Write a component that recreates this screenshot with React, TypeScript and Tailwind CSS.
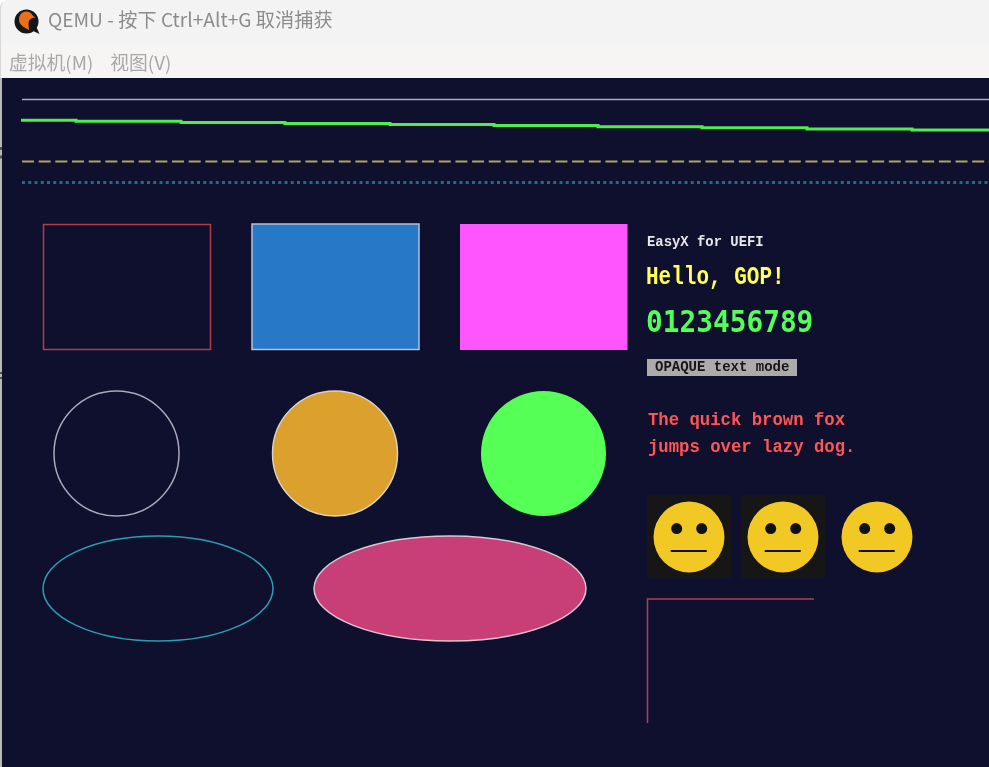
const Smiley = ({ box }: { box: boolean }) => (
  <div className={`w-[84px] h-[83px] flex items-center justify-center ${box ? "bg-[#161616]" : ""}`}>
    <svg width="72" height="72" viewBox="0 0 72 72">
      <circle cx="36" cy="36" r="35.5" fill="#f2c824" />
      <circle cx="23.7" cy="27.6" r="5.5" fill="#111" />
      <circle cx="48.7" cy="27.6" r="5.5" fill="#111" />
      <rect x="17.700" y="49" width="36" height="2" fill="#111" />
    </svg>
  </div>
);

// framebuffer drawing, viewBox uses window coordinates
const Shapes = () => (
  <svg className="absolute left-[-2px] top-0" width="989" height="689" viewBox="0 78 989 689" fill="none">
    <path d="M0 148.500H2M0 157H2" stroke="#555" strokeWidth="3" />
    <path d="M0 373H2M0 378H2" stroke="#555" strokeWidth="2" />
    <line x1="22" y1="99.500" x2="989" y2="99.500" stroke="#b0adbe" strokeWidth="1.600" />
    <path d="M21 120.200H76V121.300H181V122.400H285V123.500H390V124.500H494V125.600H598V126.700H702V127.800H807V128.900H912V130H989" stroke="#4dee4d" strokeWidth="3" />
    <line x1="22" y1="161.500" x2="989" y2="161.500" stroke="#b0a658" strokeWidth="2.200" strokeDasharray="12 4.67" />
    <line x1="22" y1="182.500" x2="989" y2="182.500" stroke="#226c82" strokeWidth="2.800" strokeDasharray="3 3.250" />
    <rect x="43.500" y="224.500" width="167" height="125" stroke="#b03c4e" strokeWidth="1.500" />
    <rect x="252" y="224" width="167" height="125.500" fill="#2878c8" stroke="#b4c4d8" strokeWidth="1.500" />
    <rect x="460" y="224" width="167.500" height="126" fill="#ff55ff" />
    <circle cx="116.500" cy="453.500" r="62.500" stroke="#aca8ba" strokeWidth="1.500" />
    <circle cx="335" cy="453.500" r="62.500" fill="#dca02c" stroke="#d8d2c8" strokeWidth="1.500" />
    <circle cx="543.500" cy="453.500" r="62.500" fill="#55ff55" />
    <ellipse cx="158" cy="588.500" rx="115" ry="52.500" stroke="#2a9fae" strokeWidth="1.500" />
    <ellipse cx="450" cy="588.500" rx="136" ry="52.500" fill="#c83f78" stroke="#d8c8d0" strokeWidth="1.500" />
    <path d="M814 599H647.500V723" stroke="#b04058" strokeWidth="1.500" />
  </svg>
);

const QemuLogo = () => (
  <svg width="27" height="26" viewBox="0 0 27 26">
    <circle cx="12.500" cy="12.500" r="12" fill="#161616" />
    <path d="M17 21 L25.500 25 L22 17Z" fill="#161616" />
    <path d="M5 11C5 6 8 2.500 12 2.500C15.500 2.500 18 4.500 19 7L21.500 8.500C19 8.500 17 9.500 15.500 11C14 13 14.500 17 15 21C11 19 5 16 5 11Z" fill="#e8701c" />
  </svg>
);

const App = () => {
  return (
    <div className="w-[989px] h-[767px] overflow-hidden flex flex-col bg-white font-['Noto_Sans_CJK_SC','Noto_Sans',sans-serif] blur-[0.6px]">
      <div className="h-[43px] flex items-center pl-[13px] gap-[7px] bg-[#f3f3f3] border-l border-t border-l-[#d8d8d8] border-t-transparent rounded-tl-[8px]">
        <QemuLogo />
        <span className="text-[19.200px] leading-none text-[#8c8c8c] mb-[5px]">QEMU - 按下 Ctrl+Alt+G 取消捕获</span>
      </div>
      <div className="h-[35px] flex items-center gap-[17px] pl-[8px] pt-[3px] bg-[#f6f5f3] border-l border-[#d8d8d8] text-[18.800px] leading-none text-[#a8a8a8]">
        <span>虚拟机(M)</span>
        <span>视图(V)</span>
      </div>
      <div className="relative flex-1 bg-[#0f0f2e] border-l-[2px] border-[#b8b8b8] font-['Liberation_Mono',monospace] font-bold">
        <Shapes />
        <div className="relative flex flex-col items-start pl-[645px] pt-[156px] whitespace-pre">
          <div className="text-[13.900px] leading-[16px] text-[#e8e8e8] scale-y-[1.1]">EasyX for UEFI</div>
          <div className="mt-[15px] -ml-px text-[21px] leading-[26px] text-[#ffff55] scale-y-[1.2]">Hello, GOP!</div>
          <div className="mt-[14px] -ml-px text-[27.800px] leading-[34px] text-[#55ff55] scale-y-[1.08] font-['DejaVu_Sans_Mono',monospace]">0123456789</div>
          <div className="mt-[20px] w-[150px] h-[17px] bg-[#ababab] text-[#161616] text-[14px] leading-[16px] pl-[8px]">OPAQUE text mode</div>
          <div className="mt-[34px] ml-px text-[17.300px] leading-[24px] text-[#ff5555] scale-y-[1.1]">The quick brown fox{"\n"}jumps over lazy dog.</div>
          <div className="mt-[37px] flex gap-[10px]">
            <Smiley box />
            <Smiley box />
            <Smiley box={false} />
          </div>
        </div>
      </div>
    </div>
  );
};

export default App;
